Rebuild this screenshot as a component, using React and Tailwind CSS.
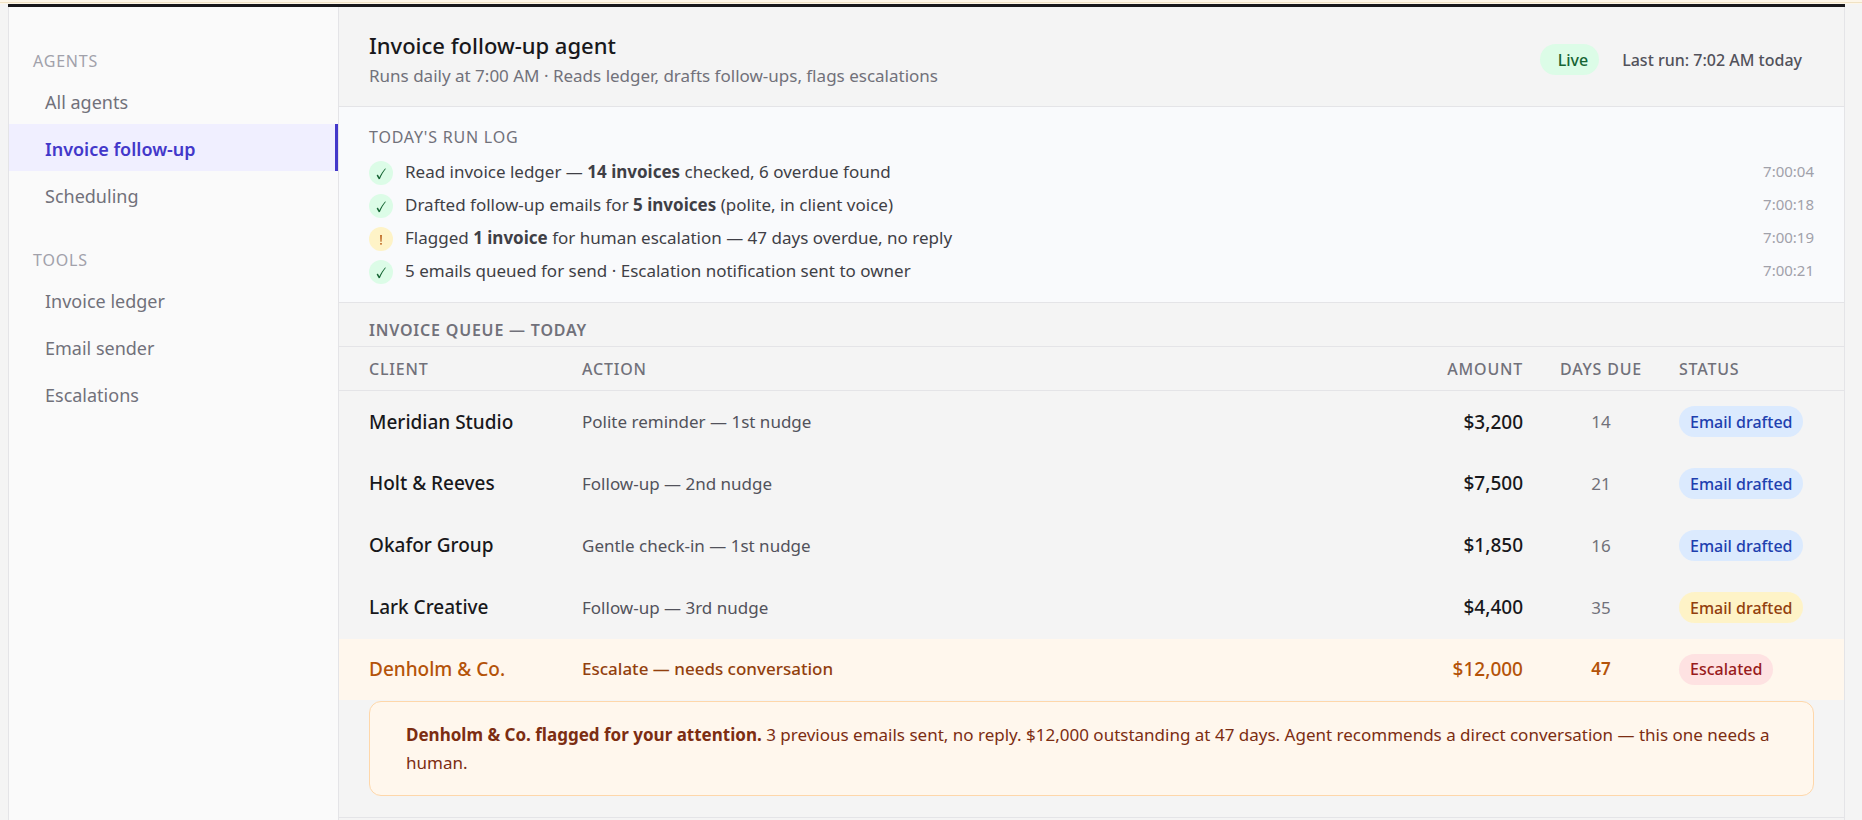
import clsx from "clsx";

const NAV_SECTIONS = [
  {
    title: "Agents",
    items: ["All agents", "Invoice follow-up", "Scheduling"],
  },
  {
    title: "Tools",
    items: ["Invoice ledger", "Email sender", "Escalations"],
  },
];

const LOG_ENTRIES = [
  {
    kind: "done",
    time: "7:00:04",
    text: (
      <>
        Read invoice ledger — <b>14 invoices</b> checked, 6 overdue found
      </>
    ),
  },
  {
    kind: "done",
    time: "7:00:18",
    text: (
      <>
        Drafted follow-up emails for <b>5 invoices</b> (polite, in client voice)
      </>
    ),
  },
  {
    kind: "warn",
    time: "7:00:19",
    text: (
      <>
        Flagged <b>1 invoice</b> for human escalation — 47 days overdue, no reply
      </>
    ),
  },
  {
    kind: "done",
    time: "7:00:21",
    text: <>5 emails queued for send · Escalation notification sent to owner</>,
  },
];

const INVOICES = [
  { client: "Meridian Studio", action: "Polite reminder — 1st nudge", amount: "$3,200", days: 14, status: "Email drafted", tone: "blue" },
  { client: "Holt & Reeves", action: "Follow-up — 2nd nudge", amount: "$7,500", days: 21, status: "Email drafted", tone: "blue" },
  { client: "Okafor Group", action: "Gentle check-in — 1st nudge", amount: "$1,850", days: 16, status: "Email drafted", tone: "blue" },
  { client: "Lark Creative", action: "Follow-up — 3rd nudge", amount: "$4,400", days: 35, status: "Email drafted", tone: "amber" },
  { client: "Denholm & Co.", action: "Escalate — needs conversation", amount: "$12,000", days: 47, status: "Escalated", tone: "red", escalated: true },
];

const PILL_TONES = {
  blue: "bg-[#dbeafe] text-[#1e40af]",
  amber: "bg-[#fef3c7] text-[#92400e]",
  red: "bg-[#fee2e2] text-[#991b1b]",
  green: "bg-[#dcfce7] text-[#166534]",
};

function Pill({ tone, className, children }) {
  return (
    <span
      className={clsx(
        "inline-flex h-[31px] items-center rounded-full text-base font-medium whitespace-nowrap",
        PILL_TONES[tone],
        className
      )}
    >
      {children}
    </span>
  );
}

function LogIcon({ kind }) {
  if (kind === "warn") {
    return (
      <svg viewBox="0 0 24 24" className="size-6 shrink-0" aria-label="Warning">
        <circle cx="12" cy="12" r="12" fill="#fef3c7" />
        <path d="M11.2 8h1.6l-.3 6.8h-1z" fill="#b45309" />
        <circle cx="12" cy="16.8" r="0.9" fill="#b45309" />
      </svg>
    );
  }
  return (
    <svg viewBox="0 0 24 24" className="size-6 shrink-0" aria-label="Done">
      <circle cx="12" cy="12" r="12" fill="#dcfce7" />
      <path
        d="M7.6 14.4l1.3-.8 1.4 2.7c1.6-3.3 3.4-6.1 5.6-8.6l1.2-.1c-2.7 3.3-4.7 6.7-6.2 10.3l-1.1.3z"
        fill="#166534"
      />
    </svg>
  );
}

function Sidebar({ active }) {
  return (
    <nav className="w-[330px] shrink-0 border-r border-[#e4e4e7] bg-[#fafafa] pt-[42px]">
      {NAV_SECTIONS.map((section) => (
        <div key={section.title} className="mb-[30px]">
          <h3 className="px-6 pb-1 text-base leading-6 tracking-wider text-[#a1a1aa] uppercase">{section.title}</h3>
          {section.items.map((item) => (
            <a
              key={item}
              href="#"
              className={clsx(
                "flex h-[47px] items-center border-r-3 pt-0.5 pl-9 text-lg",
                item === active
                  ? "border-[#4338ca] bg-[#f0efff] font-semibold text-[#4338ca]"
                  : "border-transparent text-[#71717a]"
              )}
            >
              {item}
            </a>
          ))}
        </div>
      ))}
    </nav>
  );
}

function RunLog() {
  return (
    <section className="border-b border-[#e4e4e7] bg-[#f9fafc] px-[30px] pt-[18px] pb-[14px]">
      <h2 className="pb-[7px] text-base leading-6 tracking-wider text-[#71717a] uppercase">Today's run log</h2>
      <ul>
        {LOG_ENTRIES.map((entry) => (
          <li key={entry.time} className="flex h-[33px] items-center gap-3">
            <LogIcon kind={entry.kind} />
            <span className="flex-1 pb-0.5 text-[17px] text-[#3f3f46]">{entry.text}</span>
            <time className="pb-[3px] text-[15px] text-[#a1a1aa]">{entry.time}</time>
          </li>
        ))}
      </ul>
    </section>
  );
}

function InvoiceTable() {
  return (
    <table className="w-full table-fixed">
      <thead>
        <tr className="h-11 border-y border-[#e4e4e7] text-base tracking-wider text-[#71717a] uppercase">
          <th className="w-[225px] pr-[18px] pl-[30px] text-left font-medium">Client</th>
          <th className="px-[18px] text-left font-medium">Action</th>
          <th className="w-[135px] px-[18px] text-right font-medium">Amount</th>
          <th className="w-[120px] text-center font-medium">Days due</th>
          <th className="w-[183px] px-[18px] text-left font-medium">Status</th>
        </tr>
      </thead>
      <tbody>
        {INVOICES.map((row) => (
          <tr
            key={row.client}
            className={clsx("text-[17px]", row.escalated ? "h-[61px] bg-[#fff7ed]" : "h-[62px]")}
          >
            <td
              className={clsx(
                "pr-[18px] pl-[30px] text-[19px] font-medium",
                row.escalated ? "text-[#b45309]" : "text-[#18181b]"
              )}
            >
              {row.client}
            </td>
            <td className={clsx("px-[18px]", row.escalated ? "font-medium text-[#92400e]" : "text-[#52525b]")}>
              {row.action}
            </td>
            <td
              className={clsx(
                "px-[18px] text-right text-[19px] font-medium",
                row.escalated ? "text-[#b45309]" : "text-[#18181b]"
              )}
            >
              {row.amount}
            </td>
            <td className={clsx("text-center", row.escalated ? "font-semibold text-[#b45309]" : "text-[#71717a]")}>
              {row.days}
            </td>
            <td className="px-[18px]">
              <Pill tone={row.tone} className="px-[11px]">
                {row.status}
              </Pill>
            </td>
          </tr>
        ))}
      </tbody>
    </table>
  );
}

export default function App() {
  return (
    <div className="flex min-h-screen flex-col bg-[#f4f4f4] font-['Noto_Sans',sans-serif]">
      <div className="h-1 bg-[#fdf6e9]">
        <div className="h-[3px] border-b border-[#f0e2c4]" />
      </div>

      <div className="mr-[17px] ml-2 flex flex-1 flex-col">
        <div className="h-[3px] bg-[#18181b]" />
        <div className="flex flex-1 border-x border-[#e4e4e7]">
          <Sidebar active="Invoice follow-up" />

          <main className="min-w-0 flex-1">
            {/* ==================== Header ==================== */}
            <header className="flex h-[100px] items-center justify-between border-b border-[#e4e4e7] px-[30px]">
              <div className="pt-2">
                <h1 className="text-[22px] leading-[30px] font-medium text-[#18181b]">Invoice follow-up agent</h1>
                <p className="text-[17px] leading-8 text-[#71717a]">
                  Runs daily at 7:00 AM · Reads ledger, drafts follow-ups, flags escalations
                </p>
              </div>
              <div className="flex items-center gap-3 pt-[6px]">
                <Pill tone="green" className="pr-[11px] pl-[18px]">
                  Live
                </Pill>
                <span className="pr-3 pl-[11px] text-base font-medium text-[#52525b]">Last run: 7:02 AM today</span>
              </div>
            </header>

            <RunLog />

            {/* ==================== Queue ==================== */}
            <section className="border-b border-[#e4e4e7] pb-[21px]">
              <h2 className="px-[30px] pt-[15px] pb-1 text-base leading-6 font-semibold tracking-wider text-[#71717a] uppercase">
                Invoice queue — today
              </h2>
              <InvoiceTable />
              <p className="mx-[30px] mt-px rounded-xl border border-[#fed7aa] bg-[#fff7ed] px-9 pt-[19px] pb-[18px] text-[17px] leading-7 text-[#7c2d12]">
                <b>Denholm & Co. flagged for your attention.</b> 3 previous emails sent, no reply. $12,000 outstanding at
                47 days. Agent recommends a direct conversation — this one needs a human.
              </p>
            </section>
          </main>
        </div>
      </div>
    </div>
  );
}
